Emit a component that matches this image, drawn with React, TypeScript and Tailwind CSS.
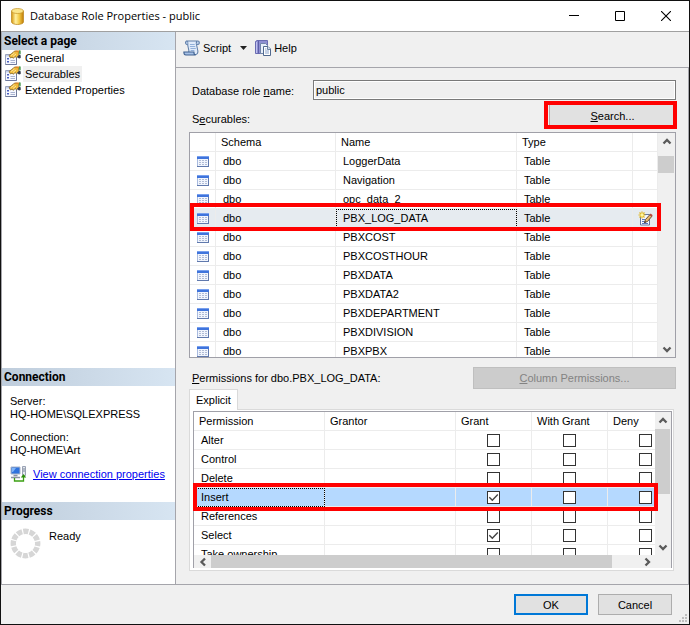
import { useState } from "react";
import type { ReactNode } from "react";
import clsx from "clsx";

const tables = [
  "LoggerData",
  "Navigation",
  "opc_data_2",
  "PBX_LOG_DATA",
  "PBXCOST",
  "PBXCOSTHOUR",
  "PBXDATA",
  "PBXDATA2",
  "PBXDEPARTMENT",
  "PBXDIVISION",
  "PBXPBX",
];

const permissions = ["Alter", "Control", "Delete", "Insert", "References", "Select", "Take ownership"];
const pages = ["General", "Securables", "Extended Properties"];

const headCell = "h-[19px] border-r border-b border-[#ececec] pl-[5px] text-left font-normal leading-[18px] whitespace-nowrap";
const plainCell = "h-[19px] border-r border-b border-[#ececec]";
const textCell = clsx(plainCell, "pl-[7px] leading-[18px] whitespace-nowrap");
const focusCell = "outline-1 -outline-offset-1 outline-black outline-dotted";

export default function App() {
  return (
    <div className="flex min-h-screen flex-col border border-[#111] bg-[#f0f0f0] font-['Liberation_Sans',Arial,sans-serif] text-[11px] leading-4 text-black">
      <TitleBar />
      <div className="flex flex-1">
        <Sidebar />
        <main className="flex min-w-0 flex-1 flex-col border-b border-[#a5a5ab]">
          <Toolbar />
          <div className="flex-1 border-r border-[#a5a5ab] pt-3 pr-3 pb-[13px] pl-[13px]">
            <div className="flex items-center">
              <label htmlFor="role" className="w-[124px] shrink-0 pt-0.5 pl-[3px]">
                Database role <u>n</u>ame:
              </label>
              <input
                id="role"
                readOnly
                value="public"
                className="h-5 min-w-0 flex-1 border border-[#7a7a7a] bg-[#f0f0f0] px-0.5 outline-1 -outline-offset-2 outline-white"
              />
            </div>
            <div className="flex items-end justify-between pt-1 pb-[5px]">
              <span className="pl-[3px]">
                S<u>e</u>curables:
              </span>
              <div className="relative">
                <button className="h-[23px] w-[127px] border border-[#adadad] bg-[#e1e1e1]">
                  <u>S</u>earch...
                </button>
                <Highlight className="-top-[3px] -right-px -bottom-0.5 -left-[5px]" />
              </div>
            </div>
            <SecurablesGrid />
            <div className="flex items-center justify-between pt-[9px]">
              <span className="pl-[3px]">
                <u>P</u>ermissions for dbo.PBX_LOG_DATA:
              </span>
              <button disabled className="h-[22px] w-[203px] border border-[#bfbfbf] bg-[#ccc] text-[#838383]">
                <u>C</u>olumn Permissions...
              </button>
            </div>
            <PermissionsTab />
          </div>
        </main>
      </div>
      <footer className="relative flex justify-end gap-2.5 py-[9px] pr-[17px]">
        <button className="h-[21px] w-[74px] border-2 border-[#0078d7] bg-[#e1e1e1]">OK</button>
        <button className="h-[21px] w-[74px] border border-[#adadad] bg-[#e1e1e1]">Cancel</button>
        <svg className="absolute right-0.5 bottom-0.5" width="8" height="8" fill="#bfbfbf">
          <path d="M6 0h2v2H6zM3 3h2v2H3zM6 3h2v2H6zM0 6h2v2H0zM3 6h2v2H3zM6 6h2v2H6z" />
        </svg>
      </footer>
    </div>
  );
}

function Highlight({ className }: { className: string }) {
  return <div className={clsx("pointer-events-none absolute border-4 border-[#f00]", className)} />;
}

function TitleBar() {
  return (
    <header className="flex h-[31px] items-center border-b border-[#a0a0a0] bg-white pl-2.5">
      <DatabaseIcon />
      <h1 className="flex-1 pl-1.5 font-['Open_Sans',sans-serif]">Database Role Properties - public</h1>
      <div className="flex h-full">
        <button aria-label="Minimize" className="flex w-[46px] items-center justify-center">
          <svg width="10" height="10" stroke="#000">
            <path d="M0 4.5h10" />
          </svg>
        </button>
        <button aria-label="Maximize" className="flex w-[46px] items-center justify-center">
          <svg width="10" height="10" fill="none" stroke="#000">
            <path d="M.5.5h9v9h-9z" />
          </svg>
        </button>
        <button aria-label="Close" className="flex w-[46px] items-center justify-center">
          <svg width="10" height="10" stroke="#000" strokeWidth="1.1">
            <path d="M0 0l10 10M10 0L0 10" />
          </svg>
        </button>
      </div>
    </header>
  );
}

function SideHeading({ children }: { children: ReactNode }) {
  return (
    <h2 className="h-[18px] bg-linear-to-r from-[#bfcddc] to-[#d7e5f2] pl-0.5 font-[Roboto,sans-serif] text-[12px] leading-[18px] font-bold">
      {children}
    </h2>
  );
}

function Sidebar() {
  return (
    <aside className="flex w-[175px] shrink-0 flex-col border-x border-b border-[#a5a5ab] bg-white">
      <nav className="flex-1">
        <SideHeading>Select a page</SideHeading>
        {pages.map((page) => (
          <a key={page} href="#" className="flex pl-[3px]">
            <PropertiesIcon />
            <span className={clsx("ml-0.5 px-0.5", page === "Securables" && "bg-[#f0f0f0]")}>{page}</span>
          </a>
        ))}
      </nav>
      <section className="pb-5">
        <SideHeading>Connection</SideHeading>
        <div className="pt-[9px] pl-2 leading-[13px]">
          <p>Server:</p>
          <p>HQ-HOME\SQLEXPRESS</p>
          <p className="pt-2.5">Connection:</p>
          <p>HQ-HOME\Art</p>
        </div>
        <a href="#" className="flex items-center gap-1.5 pt-[9px] pl-2 text-[#0000f0] underline">
          <ConnectionIcon />
          View connection properties
        </a>
      </section>
      <section className="pb-[25px]">
        <SideHeading>Progress</SideHeading>
        <div className="flex gap-2 pt-2 pl-2">
          <svg width="31" height="31" viewBox="-15.5 -15.5 31 31" fill="none">
            <circle r="12.2" stroke="#d6d6d6" strokeWidth="5.4" strokeDasharray="5.2 1.188" strokeDashoffset="2.6" />
          </svg>
          <p>Ready</p>
        </div>
      </section>
    </aside>
  );
}

function Toolbar() {
  return (
    <div className="flex h-9 items-center border-b border-[#a5a5ab] pb-[3px] pl-[7px]">
      <button className="flex items-center gap-[3px]">
        <ScriptIcon />
        Script
      </button>
      <button aria-label="Script options" className="flex w-6 justify-center">
        <svg width="7" height="4">
          <path d="M0 0h7L3.5 4z" fill="#222" />
        </svg>
      </button>
      <button className="flex items-center gap-[3px]">
        <HelpIcon />
        Help
      </button>
    </div>
  );
}

function SecurablesGrid() {
  return (
    <div className="relative flex h-[226px] border border-[#a0a0a8] bg-white">
      <div className="min-w-0 flex-1 overflow-hidden">
        <table className="w-full table-fixed border-separate border-spacing-0">
          <thead>
            <tr>
              <th aria-label="Icon" className={clsx(headCell, "w-[26px]")} />
              <th className={clsx(headCell, "w-[120px]")}>Schema</th>
              <th className={headCell}>Name</th>
              <th className={clsx(headCell, "w-[116px]")}>Type</th>
              <th aria-label="Status" className={clsx(headCell, "w-[25px]")} />
            </tr>
          </thead>
          <tbody>
            {tables.map((name) => {
              const selected = name === "PBX_LOG_DATA";
              return (
                <tr key={name} className={clsx(selected && "bg-[#e6ebf0]")}>
                  <td className={textCell}>
                    <TableIcon />
                  </td>
                  <td className={textCell}>dbo</td>
                  <td className={clsx(textCell, selected && focusCell)}>{name}</td>
                  <td className={textCell}>Table</td>
                  <td className={clsx(plainCell, "pl-[5px]")}>{selected && <EditIcon />}</td>
                </tr>
              );
            })}
          </tbody>
        </table>
      </div>
      <div className="flex w-[17px] flex-col bg-[#f0f0f0]">
        <ScrollButton dir="up" />
        <div className="flex-1">
          <div className="mt-1.5 mr-px h-[17px] bg-[#cdcdcd]" />
        </div>
        <ScrollButton dir="down" />
      </div>
      <Highlight className="top-[70px] right-3.5 left-0 h-7" />
    </div>
  );
}

function PermissionsTab() {
  return (
    <div className="mr-0.5">
      <div role="tablist" className="flex">
        <button
          role="tab"
          aria-selected="true"
          className="relative -mb-px h-[21px] border border-b-0 border-[#dadada] bg-white px-1.5"
        >
          Explicit
        </button>
      </div>
      <div className="border border-[#dadada] bg-white pt-px pr-px pb-0.5 pl-[3px]">
        <PermissionsGrid />
      </div>
    </div>
  );
}

function PermissionsGrid() {
  const [granted, setGranted] = useState(["Insert/Grant", "Select/Grant"]);

  const toggle = (key: string) =>
    setGranted((list) => (list.includes(key) ? list.filter((k) => k !== key) : [...list, key]));

  return (
    <div className="relative border-x border-t border-[#a0a0a8]">
      <div className="flex h-[143px]">
        <div className="min-w-0 flex-1 overflow-hidden">
          {/* wider than the viewport, the Deny column is cut off */}
          <table className="w-[calc(100%+29px)] table-fixed border-separate border-spacing-0">
            <thead>
              <tr>
                <th className={clsx(headCell, "w-[131px]")}>Permission</th>
                <th className={headCell}>Grantor</th>
                <th className={clsx(headCell, "w-[76px]")}>Grant</th>
                <th className={clsx(headCell, "w-[76px]")}>With Grant</th>
                <th className={clsx(headCell, "w-[76px]")}>Deny</th>
              </tr>
            </thead>
            <tbody>
              {permissions.map((name) => {
                const selected = name === "Insert";
                return (
                  <tr key={name} className={clsx(selected && "bg-[#b5d9ff]")}>
                    <td className={clsx(textCell, selected && focusCell)}>{name}</td>
                    <td className={textCell} />
                    {["Grant", "With Grant", "Deny"].map((kind) => {
                      const key = `${name}/${kind}`;
                      return (
                        <td key={kind} className={plainCell}>
                          <Check label={`${kind} ${name}`} checked={granted.includes(key)} onChange={() => toggle(key)} />
                        </td>
                      );
                    })}
                  </tr>
                );
              })}
            </tbody>
          </table>
        </div>
        <div className="flex w-4 flex-col bg-[#f0f0f0]">
          <ScrollButton dir="up" />
          <div className="flex-1">
            <div className="mr-px h-[65px] bg-[#cdcdcd]" />
          </div>
          <ScrollButton dir="down" />
        </div>
      </div>
      <div className="flex h-[13px] bg-[#f0f0f0] pr-4">
        <ScrollButton dir="left" />
        <div className="flex-1">
          <div className="h-full w-[94%] bg-[#cdcdcd]" />
        </div>
        <ScrollButton dir="right" />
      </div>
      <Highlight className="top-[71px] right-[13px] -left-px h-7" />
    </div>
  );
}

function Check({ label, checked, onChange }: { label: string; checked: boolean; onChange: () => void }) {
  return (
    <label className="flex h-[18px] items-end justify-center pb-0.5">
      <span className="grid">
        <input
          type="checkbox"
          aria-label={label}
          checked={checked}
          onChange={onChange}
          className="col-start-1 row-start-1 size-[13px] appearance-none border border-[#333] bg-white"
        />
        {checked && (
          <svg className="pointer-events-none col-start-1 row-start-1" width="13" height="13" fill="none" stroke="#444" strokeWidth="1.4">
            <path d="M2.3 6.3l3 2.9L10.8 3.5" />
          </svg>
        )}
      </span>
    </label>
  );
}

const arrows = {
  up: "M1.5 6.5L5 3l3.5 3.5",
  down: "M1.5 3.5L5 7l3.5-3.5",
  left: "M7 1.5L3.5 5L7 8.5",
  right: "M3.5 1.5L7 5L3.5 8.5",
};

function ScrollButton({ dir }: { dir: keyof typeof arrows }) {
  const vertical = dir === "up" || dir === "down";
  return (
    <button aria-label={`Scroll ${dir}`} className={clsx("flex items-center justify-center", vertical ? "h-[17px] w-full" : "h-full w-[17px]")}>
      <svg width="10" height="10" fill="none" stroke="#5a5a5a" strokeWidth="2.3">
        <path d={arrows[dir]} />
      </svg>
    </button>
  );
}

function DatabaseIcon() {
  return (
    <svg width="13" height="17" viewBox="0 0 12 17" preserveAspectRatio="none">
      <defs>
        <linearGradient id="gold">
          <stop offset="0" stopColor="#d99a12" />
          <stop offset=".35" stopColor="#fff0a0" />
          <stop offset=".65" stopColor="#f3c944" />
          <stop offset="1" stopColor="#c07d08" />
        </linearGradient>
      </defs>
      <path d="M.5 3v11c0 1.4 2.5 2.5 5.5 2.5s5.5-1.1 5.5-2.5V3z" fill="url(#gold)" stroke="#b98318" strokeWidth=".7" />
      <ellipse cx="6" cy="3" rx="5.5" ry="2.5" fill="#fbe58a" stroke="#c8962a" strokeWidth=".7" />
    </svg>
  );
}

function PropertiesIcon() {
  return (
    <svg width="16" height="16" viewBox="0 0 16 16">
      <path d="M.5 4.5h11v10H.5z" fill="#f6f8ff" stroke="#9aa3bd" />
      <path d="M1 5h6v1.5H1z" fill="#c3cfec" />
      <path d="M.5 14.5h11V8" fill="none" stroke="#6f7a9c" />
      <path d="M2 8h2v1.5H2zM2 11h2v1.5H2z" fill="#4a5fc0" />
      <path d="M5.5 10.5H10M5.5 12.5H10" stroke="#a9b3cf" />
      <path d="M4 5.5l4-3L9.5 1l4 .5.5 4-2.5 2.3L10 6.5 8.500 8.300 7 7.200 5.500 8z" fill="#efba3a" stroke="#75581c" strokeWidth=".7" />
      <path d="M6 5.500L9.500 3M8 6.500L11 4" stroke="#ffe9a0" strokeWidth=".9" />
      <path d="M9.500 1.200L11 .5h4V2l-1.500.5z" fill="#e08a28" />
      <path d="M14 .5h1.700v4L14 3.500z" fill="#4c9c50" />
      <path d="M12 7l2.500-2.500 1.200 1V8l-1.700.5z" fill="#333a4c" />
    </svg>
  );
}

function TableIcon() {
  return (
    <svg className="block" width="12" height="11" viewBox="0 0 12 11">
      <path d="M.5.5h11v10H.5z" fill="#f1f5fd" stroke="#a9bbdf" />
      <path d="M0 0h12v3H0z" fill="#3f74dc" />
      <path d="M0 .5h12" stroke="#78a0ee" />
      <path d="M2 4.500h2M5 4.500h2M8 4.500h2M2 6.500h2M5 6.500h2M8 6.500h2M2 8.500h2M5 8.500h2M8 8.500h2" stroke="#b0bcd6" />
      <path d="M11.5 3v8M0 10.500h12" stroke="#6079ad" />
    </svg>
  );
}

function EditIcon() {
  return (
    <svg className="block" width="15" height="15" viewBox="0 0 15 15">
      <path d="M2.5 3.5h9V14h-9z" fill="#f5f8ff" stroke="#66799f" />
      <path d="M4 8.500h3M4 10.500h2M4 12.500h6" stroke="#5c78bb" />
      <path d="M4 .5v7M.5 4h7M1.500 1.500l5 5M6.500 1.500l-5 5" stroke="#dfb51e" strokeWidth="1.2" />
      <circle cx="4" cy="4" r="1.7" fill="#fff6a0" />
      <path d="M6.500 11.500l1-3L12 3.500l2 1.700-4.500 5.300z" fill="#e9b96a" stroke="#5b4330" strokeWidth=".9" />
      <path d="M11.500 4l1.200-1.400 2 1.700-1.200 1.400z" fill="#b5483c" />
      <path d="M6.200 12l.6-1.900 1.300 1.200z" fill="#222" />
    </svg>
  );
}

function ScriptIcon() {
  return (
    <svg width="17" height="16" viewBox="0 0 16 16" preserveAspectRatio="none">
      <path d="M4 1h10c-1.500.5-1.800 2-1.200 4l1.200 6c.2 1.500-.5 3.500-2 3.500H4.500c1-1 1.300-2.500 1-4L4.600 6C4.200 3.500 5 2.500 4 1z" fill="#e0ebfa" stroke="#5f7ea8" />
      <path d="M3.800 1c-1.800 0-1.900 3.200-.3 3.400l1-.4M14 1c1.800.1 1.800 3.300.2 3.400l-1.700-.1" fill="#b8cdea" stroke="#5f7ea8" />
      <path d="M.8 12c0 1.800.7 3 2 3H12c-1.400-.2-1.800-1.500-1.700-3z" fill="#a6c1e6" stroke="#3f6190" />
      <path d="M6.500 4.500H11M6.500 6.500h5M7 8.500h5M7.200 10.500h3.500" stroke="#8babd6" strokeWidth=".9" />
    </svg>
  );
}

function HelpIcon() {
  return (
    <svg width="16" height="16" viewBox="0 0 16 16">
      <path d="M.5 1.500L2 .5h10.500v13H.5z" fill="#8f90d2" stroke="#6a6cb2" />
      <path d="M3.500 1v12.500" stroke="#5d5fa8" />
      <path d="M1.500 2v11" stroke="#c1c2ee" />
      <path d="M5.500 3.500h5l2 2v8h-7z" fill="#e9f0fb" stroke="#7286ab" />
      <path d="M8.500 6.500H13L15.500 9v6.500h-7z" fill="#fff" stroke="#50698f" />
      <path d="M12.500 6.500v3h3" fill="#cfdcf0" stroke="#50698f" strokeWidth=".8" />
      <path d="M10 9h1.500M10 11h4M10 13h4" stroke="#8aa3cb" />
    </svg>
  );
}

function ConnectionIcon() {
  return (
    <svg width="17" height="16" viewBox="0 0 17 16">
      <path d="M1 1h9v7H1z" fill="#2f72dd" stroke="#a9b5cb" />
      <path d="M2 2h4L3 6H2z" fill="#7fb4f8" />
      <path d="M3.500 9.500h4M1 11.500h9" stroke="#8c94a3" strokeWidth="1.4" />
      <path d="M12.500.5h3v9h-3z" fill="#e4e8ef" stroke="#9aa3b4" />
      <path d="M13 3h2M13 5h2" stroke="#7a8598" />
      <path d="M4.500 12v3h9v-4" fill="none" stroke="#3ba012" strokeWidth="1.3" />
      <path d="M10.800 11.500L13.500 8l2.700 3.500z" fill="#2f8f0c" />
    </svg>
  );
}
